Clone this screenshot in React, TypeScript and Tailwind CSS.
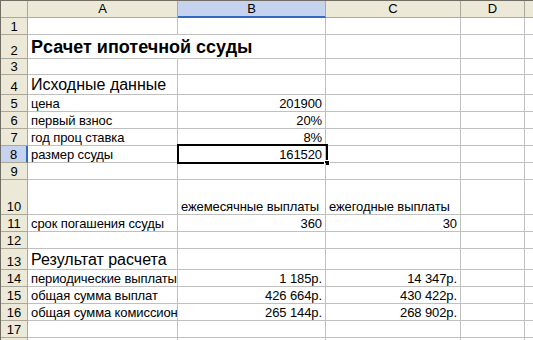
const font = { fontFamily: '"Liberation Sans", Arial, sans-serif' }

type Cell = { text?: string; align?: 'left' | 'right'; size?: 'title' | 'big'; spill?: boolean }

interface Row {
  n: number
  h: string
  a?: Cell
  b?: Cell
  c?: Cell
}

const rows: Row[] = [
  { n: 1, h: 'h-[17px]' },
  { n: 2, h: 'h-[24px]', a: { text: 'Рсачет ипотечной ссуды', size: 'title', spill: true } },
  { n: 3, h: 'h-[16px]' },
  { n: 4, h: 'h-[20px]', a: { text: 'Исходные данные', size: 'big' } },
  { n: 5, h: 'h-[17px]', a: { text: 'цена' }, b: { text: '201900', align: 'right' } },
  { n: 6, h: 'h-[17px]', a: { text: 'первый взнос' }, b: { text: '20%', align: 'right' } },
  { n: 7, h: 'h-[17px]', a: { text: 'год проц ставка' }, b: { text: '8%', align: 'right' } },
  { n: 8, h: 'h-[17px]', a: { text: 'размер ссуды' }, b: { text: '161520', align: 'right' } },
  { n: 9, h: 'h-[17px]' },
  { n: 10, h: 'h-[35px]', b: { text: 'ежемесячные выплаты' }, c: { text: 'ежегодные выплаты' } },
  { n: 11, h: 'h-[17px]', a: { text: 'срок погашения ссуды' }, b: { text: '360', align: 'right' }, c: { text: '30', align: 'right' } },
  { n: 12, h: 'h-[17px]' },
  { n: 13, h: 'h-[21px]', a: { text: 'Результат расчета', size: 'big' } },
  { n: 14, h: 'h-[17px]', a: { text: 'периодические выплаты' }, b: { text: '1 185р.', align: 'right' }, c: { text: '14 347р.', align: 'right' } },
  { n: 15, h: 'h-[17px]', a: { text: 'общая сумма выплат' }, b: { text: '426 664р.', align: 'right' }, c: { text: '430 422р.', align: 'right' } },
  { n: 16, h: 'h-[17px]', a: { text: 'общая сумма комиссионных' }, b: { text: '265 144р.', align: 'right' }, c: { text: '268 902р.', align: 'right' } },
  { n: 17, h: 'h-[17px]' },
  { n: 18, h: 'h-[17px]' },
]

function CellBox({ cell, width }: { cell?: Cell; width: string }) {
  const size =
    cell?.size === 'title' ? 'text-[18px] font-bold leading-[21px]' :
    cell?.size === 'big' ? 'text-[16px] leading-[18px]' :
    'text-[13px] leading-[15px] tracking-[-0.1px]'
  const edge = cell?.spill ? 'border-r border-r-transparent overflow-visible relative z-10' : 'border-r border-r-[#c0c0c0] overflow-hidden'
  return (
    <div className={`${width} shrink-0 h-full border-b border-b-[#c0c0c0] ${edge} flex items-end ${cell?.align === 'right' ? 'justify-end pr-[3px]' : 'pl-[3px]'}`}>
      {cell?.text && <span className={`whitespace-nowrap ${size}`}>{cell.text}</span>}
    </div>
  )
}

export default function App() {
  return (
    <div className="w-[533px] h-[340px] overflow-hidden bg-white text-black border-l border-[#716f64]" style={font}>
      {/* column headers */}
      <div className="flex h-[18px] border-t border-[#716f64] text-[13px]">
        <div className="w-[27px] shrink-0 bg-[#ece9d8] border-r border-b border-[#aca899]" />
        <div className="w-[150px] shrink-0 bg-[#ece9d8] border-r border-b border-[#aca899] flex items-center justify-center">A</div>
        <div className="w-[148px] shrink-0 bg-[#c5d3ef] border-r border-b-2 border-r-[#aca899] border-b-[#316ac5] flex items-center justify-center">B</div>
        <div className="w-[135px] shrink-0 bg-[#ece9d8] border-r border-b border-[#aca899] flex items-center justify-center">C</div>
        <div className="w-[64px] shrink-0 bg-[#ece9d8] border-r border-b border-[#aca899] flex items-center justify-center">D</div>
        <div className="flex-1 bg-[#ece9d8] border-b border-[#aca899]" />
      </div>

      {rows.map(r => (
        <div key={r.n} className={`flex ${r.h}`}>
          <div className={`w-[27px] shrink-0 h-full flex items-end justify-center text-[13px] leading-[15px] border-b border-[#aca899] ${r.n === 8 ? 'bg-[#c5d3ef] border-r-2 border-r-[#316ac5]' : 'bg-[#ece9d8] border-r border-r-[#aca899]'}`}>
            {r.n < 18 && r.n}
          </div>
          <CellBox cell={r.a} width="w-[150px]" />
          <div className="relative w-[148px] shrink-0 h-full">
            <CellBox cell={r.b} width="w-[148px]" />
            {r.n === 8 && (
              <>
                <div className="absolute -left-[1px] -top-[2px] w-[151px] h-[20px] border-2 border-black" />
                <div className="absolute -right-[4px] bottom-[-3px] w-[6px] h-[6px] bg-black border border-white" />
              </>
            )}
          </div>
          <CellBox cell={r.c} width="w-[135px]" />
          <CellBox width="w-[64px]" />
          <div className="flex-1 h-full border-b border-[#c0c0c0]" />
        </div>
      ))}
    </div>
  )
}
